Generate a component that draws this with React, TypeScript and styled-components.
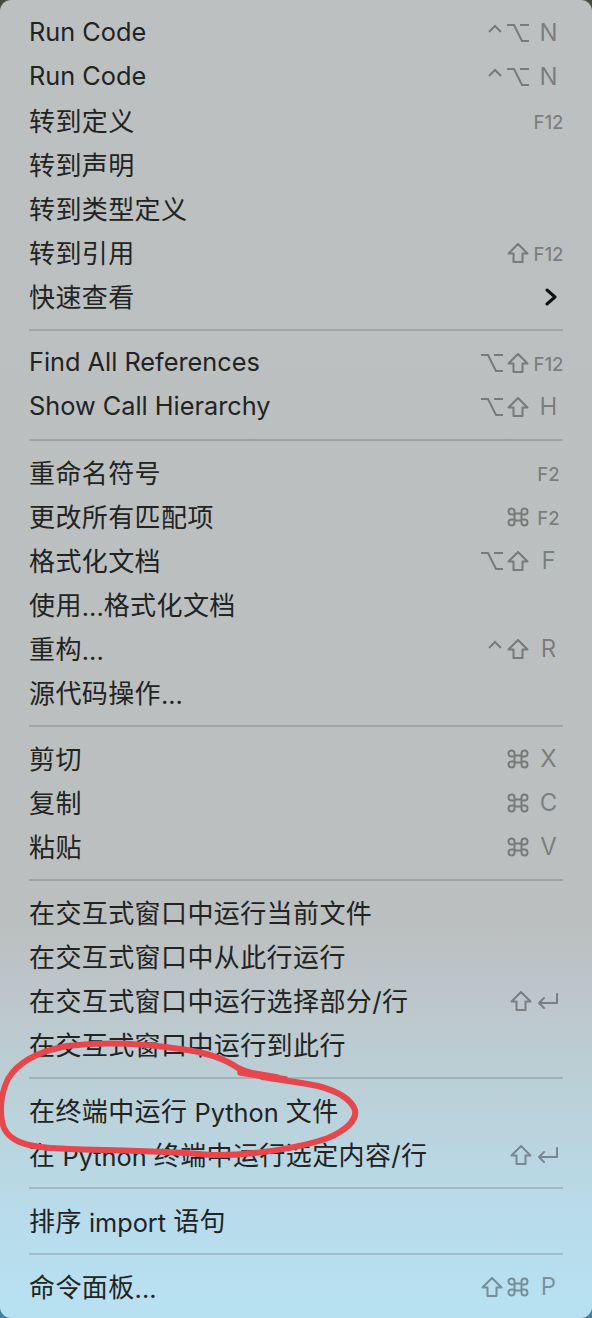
import React from "react";
import styled, { createGlobalStyle } from "styled-components";

const Global = createGlobalStyle`
  html, body { margin: 0; padding: 0; }
  body {
    width: 592px;
    min-height: 1318px;
    background: linear-gradient(180deg, #4a4a44 0%, #55585a 60%, #3f7fa6 100%);
    font-family: Inter, "Noto Sans CJK SC", sans-serif;
    -webkit-font-smoothing: antialiased;
  }
`;

const Menu = styled.div`
  position: relative;
  display: flex;
  flex-direction: column;
  box-sizing: border-box;
  width: 592px;
  padding: 11px 0 9px;
  border-radius: 11px;
  background: linear-gradient(
    180deg,
    #bdc0c0 0%,
    #bcbfbf 70%,
    #bccacf 78%,
    #bad4de 86%,
    #b8dcec 93%,
    #b7e1f1 100%
  );
`;

const Row = styled.div`
  display: flex;
  align-items: center;
  height: 44px;
  padding: 0 28px 0 29px;
`;

const Label = styled.span`
  flex: 1;
  padding-bottom: 4px;
  font-size: 26px;
  color: #222323;
  white-space: nowrap;
  letter-spacing: 0.4px;
`;

const Latin = styled.span`
  font-family: Inter, sans-serif;
  font-size: 25.3px;
  letter-spacing: 0;
  vertical-align: -1px;
`;

const Shortcut = styled.span`
  display: flex;
  align-items: center;
  color: rgba(0, 0, 0, 0.36);
`;

const Mods = styled.span`
  display: flex;
  align-items: center;
  gap: 4px;
  margin-right: 4px;
`;

const Key = styled.span<{ $small?: boolean }>`
  width: 31px;
  text-align: center;
  font-family: Inter, sans-serif;
  font-size: ${(p) => (p.$small ? "18.5px" : "24px")};
  font-weight: ${(p) => (p.$small ? 500 : 400)};
  line-height: 1;
  padding-top: ${(p) => (p.$small ? "3px" : "0")};
`;

const Separator = styled.div`
  display: flex;
  align-items: center;
  height: 22px;
  padding: 0 29px;
  &::after {
    content: "";
    flex: 1;
    height: 2px;
    background: rgba(0, 0, 0, 0.14);
  }
`;

const Chevron = styled.svg`
  margin-right: 7px;
`;

const Annotation = styled.svg`
  position: absolute;
  left: 0;
  top: 0;
  width: 592px;
  height: 1318px;
  pointer-events: none;
`;

type Mod = "ctrl" | "opt" | "shift" | "cmd" | "ret";

const stroke = {
  fill: "none",
  stroke: "currentColor",
  strokeWidth: 2,
  strokeLinejoin: "round" as const,
  strokeLinecap: "round" as const,
};

const ModIcon = ({ m }: { m: Mod }) => {
  switch (m) {
    case "ctrl":
      return (
        <svg width="16" height="20" viewBox="0 0 16 20">
          <path d="M2 9 L8 3 L14 9" {...stroke} strokeLinejoin="miter" strokeLinecap="butt" />
        </svg>
      );
    case "opt":
      return (
        <svg width="22" height="20" viewBox="0 0 22 20">
          <path d="M0 2 H7 L15 18 H22 M13 2 H22" {...stroke} strokeLinejoin="miter" strokeLinecap="butt" />
        </svg>
      );
    case "shift":
      return (
        <svg width="22" height="20" viewBox="0 0 22 20">
          <path d="M11 1 L20.5 10.5 H15.5 V19 H6.5 V10.5 H1.5 Z" {...stroke} />
        </svg>
      );
    case "cmd":
      return (
        <svg width="22" height="20" viewBox="0 0 22 20">
          <path
            d="M7.5 6.5 H14.5 V13.5 H7.5 Z M7.5 6.5 V4.5 A3 3 0 1 0 4.5 7.5 H7.5 M14.5 6.5 V4.5 A3 3 0 1 1 17.5 7.5 H14.5 M7.5 13.5 V15.5 A3 3 0 1 1 4.5 12.5 H7.5 M14.5 13.5 V15.5 A3 3 0 1 0 17.5 12.5 H14.5"
            {...stroke}
          />
        </svg>
      );
    case "ret":
      return (
        <svg width="24" height="20" viewBox="0 0 24 20">
          <path d="M21 3 V12 H3 M8 7 L3 12 L8 17" {...stroke} />
        </svg>
      );
  }
};

type Item = {
  label: string;
  mods?: Mod[];
  keyText?: string;
  small?: boolean;
  submenu?: boolean;
};

const sections: Item[][] = [
  [
    { label: "Run Code", mods: ["ctrl", "opt"], keyText: "N" },
    { label: "Run Code", mods: ["ctrl", "opt"], keyText: "N" },
    { label: "转到定义", keyText: "F12", small: true },
    { label: "转到声明" },
    { label: "转到类型定义" },
    { label: "转到引用", mods: ["shift"], keyText: "F12", small: true },
    { label: "快速查看", submenu: true },
  ],
  [
    { label: "Find All References", mods: ["opt", "shift"], keyText: "F12", small: true },
    { label: "Show Call Hierarchy", mods: ["opt", "shift"], keyText: "H" },
  ],
  [
    { label: "重命名符号", keyText: "F2", small: true },
    { label: "更改所有匹配项", mods: ["cmd"], keyText: "F2", small: true },
    { label: "格式化文档", mods: ["opt", "shift"], keyText: "F" },
    { label: "使用...格式化文档" },
    { label: "重构...", mods: ["ctrl", "shift"], keyText: "R" },
    { label: "源代码操作..." },
  ],
  [
    { label: "剪切", mods: ["cmd"], keyText: "X" },
    { label: "复制", mods: ["cmd"], keyText: "C" },
    { label: "粘贴", mods: ["cmd"], keyText: "V" },
  ],
  [
    { label: "在交互式窗口中运行当前文件" },
    { label: "在交互式窗口中从此行运行" },
    { label: "在交互式窗口中运行选择部分/行", mods: ["shift", "ret"] },
    { label: "在交互式窗口中运行到此行" },
  ],
  [
    { label: "在终端中运行 Python 文件" },
    { label: "在 Python 终端中运行选定内容/行", mods: ["shift", "ret"] },
  ],
  [{ label: "排序 import 语句" }],
  [{ label: "命令面板...", mods: ["shift", "cmd"], keyText: "P" }],
];

const LabelText = ({ text }: { text: string }) => (
  <Label>
    {text.split(/([A-Za-z .]+)/).map((part, i) =>
      /[A-Za-z.]/.test(part) ? <Latin key={i}>{part}</Latin> : part
    )}
  </Label>
);

const MenuRow = ({ item }: { item: Item }) => (
  <Row>
    <LabelText text={item.label} />
    {item.submenu ? (
      <Chevron width="12" height="18" viewBox="0 0 12 18">
        <path d="M2 2 L10 9 L2 16" fill="none" stroke="#111" strokeWidth="3" strokeLinecap="round" strokeLinejoin="round" />
      </Chevron>
    ) : item.mods || item.keyText ? (
      <Shortcut>
        {item.mods && (
          <Mods>
            {item.mods.map((m, i) => (
              <ModIcon key={i} m={m} />
            ))}
          </Mods>
        )}
        {item.keyText ? <Key $small={item.small}>{item.keyText}</Key> : null}
      </Shortcut>
    ) : null}
  </Row>
);

export default function App() {
  return (
    <>
      <Global />
      <Menu>
        {sections.map((sec, si) => (
          <React.Fragment key={si}>
            {si > 0 && <Separator />}
            {sec.map((item, ii) => (
              <MenuRow key={ii} item={item} />
            ))}
          </React.Fragment>
        ))}
        <Annotation viewBox="0 0 592 1318">
          <path
            d="M 285 1079 C 265 1077, 248 1073, 238 1068 C 225 1059, 205 1052, 180 1049 C 140 1043, 100 1042, 67 1046 C 40 1051, 18 1062, 8 1079 C 0 1095, -1 1115, 4 1128 C 10 1141, 25 1146, 50 1148 C 100 1151, 160 1150, 210 1155 C 250 1156, 300 1148, 328 1138 C 346 1130, 357 1120, 355 1110 C 351 1099, 337 1091, 318 1086 C 300 1082, 280 1080, 262 1077"
            fill="none"
            stroke="#e6464c"
            strokeWidth="6"
            strokeLinecap="round"
            strokeLinejoin="round"
          />
          <path d="M 241 1072 L 277 1078" stroke="#e6464c" strokeWidth="7.5" strokeLinecap="round" />
        </Annotation>
      </Menu>
    </>
  );
}
